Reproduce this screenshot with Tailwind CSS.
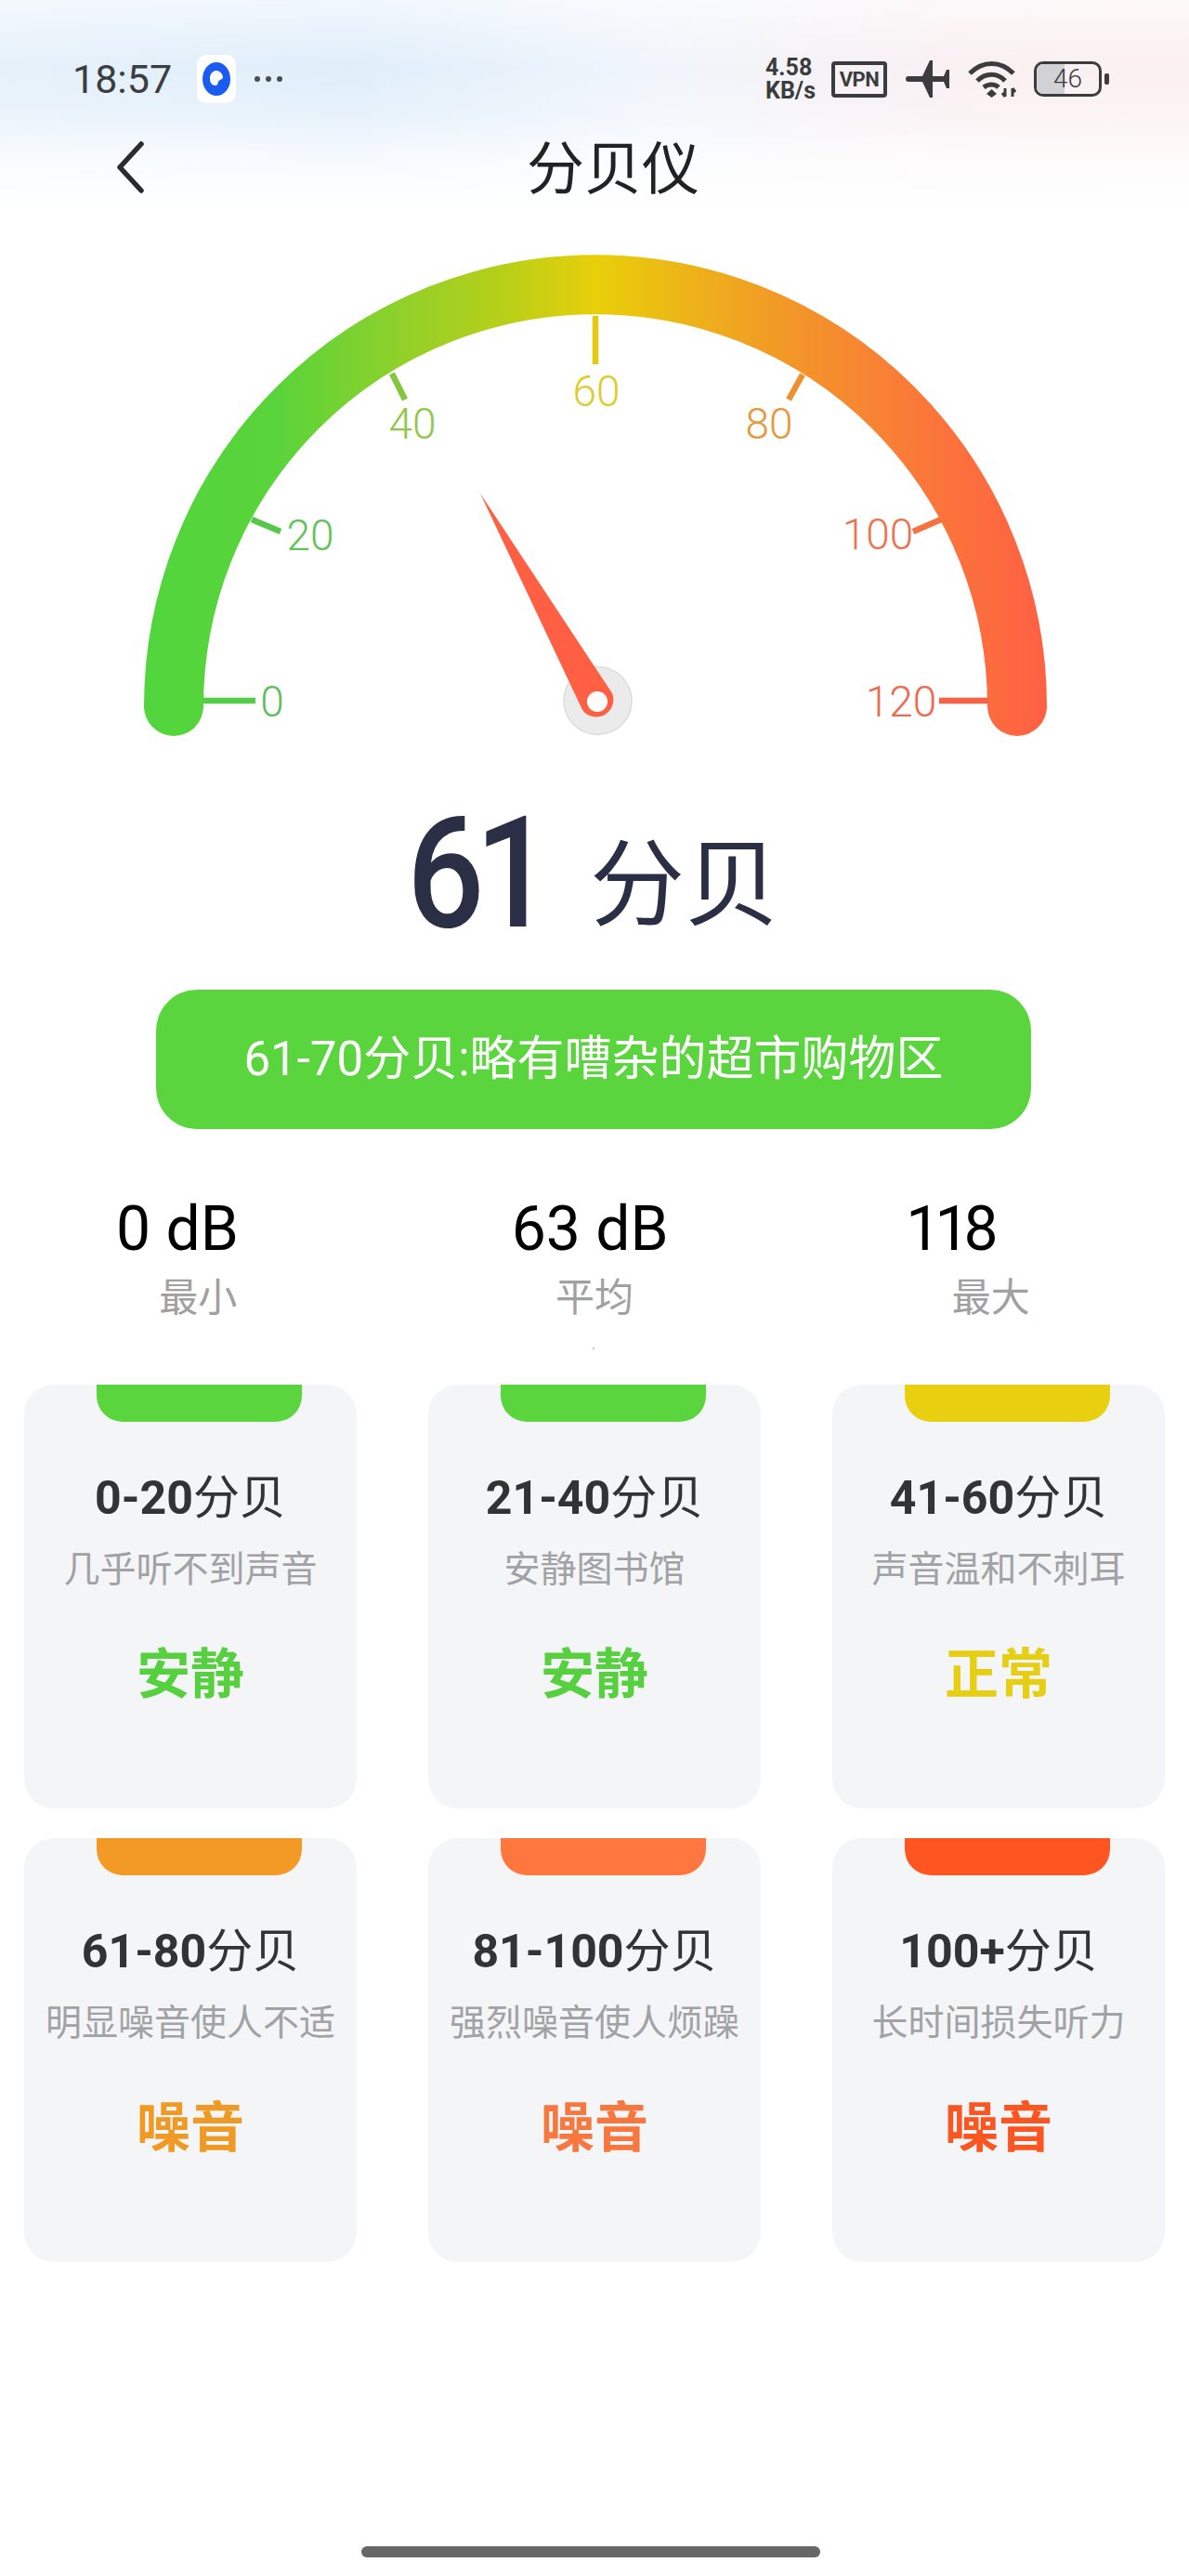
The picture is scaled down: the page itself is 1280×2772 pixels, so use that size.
<!DOCTYPE html>
<html lang="zh-CN">
<head>
    <meta charset="UTF-8">
    <meta name="viewport" content="width=device-width, initial-scale=1.0">
    <title>分贝仪</title>
    <script src="https://cdn.jsdelivr.net/npm/@tailwindcss/browser@4"></script>
</head>
<body class="bg-white">
<div class="relative w-[1280px] h-[2772px] overflow-hidden bg-white font-['Roboto','Noto_Sans_CJK_SC',sans-serif]">
    <!-- tinted backdrop behind status bar -->
    <div class="absolute top-0 left-0 w-full h-[240px] bg-[linear-gradient(to_right,#e6f1fa_0%,#e0eefa_30%,#f0f5fb_55%,#f9f0f2_80%,#fbf0f1_100%)]">
        <div class="w-full h-full bg-[linear-gradient(to_bottom,rgba(255,255,255,0.55)_0%,rgba(255,255,255,0)_30%,rgba(255,255,255,0.2)_50%,rgba(255,255,255,0.75)_72%,rgba(255,255,255,1)_95%)]"></div>
    </div>

    <div class="relative">
        <!-- status bar -->
        <div class="flex items-center h-[42px] mt-[64px]">
            <span class="ml-[78px] w-[110px] text-[43px] leading-none text-[#3a3d42]">18:57</span>
            <div class="ml-[24px] w-[42px] h-[52px] rounded-[10px] bg-white flex items-center justify-center">
                <svg width="30" height="36" viewBox="0 0 30 36"><ellipse cx="15" cy="18" rx="15" ry="18" fill="#1a5cf0"/><path d="M8 18a7 8 0 0 1 14-2c0 3-4 2-5 5s-1 4-3 4c-4 0-6-3-6-7z" fill="#fff"/></svg>
            </div>
            <div class="ml-[20px] flex gap-[6px]">
                <div class="w-[6px] h-[6px] rounded-full bg-[#4a4d52]"></div>
                <div class="w-[6px] h-[6px] rounded-full bg-[#4a4d52]"></div>
                <div class="w-[6px] h-[6px] rounded-full bg-[#4a4d52]"></div>
            </div>

            <div class="ml-[520px] w-[60px] flex flex-col text-[25px] leading-[25px] font-bold text-[#3c3c3e]">
                <span>4.58</span>
                <span>KB/s</span>
            </div>
            <div class="ml-[11px] w-[60px] h-[39px] border-[4px] border-[#3c3c3e] rounded-[4px] flex items-center justify-center text-[22px] font-bold text-[#3c3c3e] tracking-[-0.5px]">VPN</div>
            <svg class="ml-[20px]" width="48" height="40" viewBox="0 0 48 40"><path d="M3 17H18L26 0H29V17H41L44 10H47V30H44L41 23H29V40H26L18 23H3A3 3 0 0 1 3 17Z" fill="#3c3c3e"/></svg>
            <svg class="ml-[18px]" width="53" height="40" viewBox="0 0 53 40" fill="none" stroke="#3c3c3e" stroke-width="5"><path d="M3 14C17 0 36 0 50 14"/><path d="M11 22C20 13 33 13 41 22"/><path d="M18 29C23 25 30 25 34 29"/><path d="M26.5 31L32 36L26.5 40L21 36Z" fill="#3c3c3e" stroke="none"/><path d="M41 30V39M38 35L41 39M49 39V30M49 30L52 34" stroke-width="3"/></svg>
            <div class="relative ml-[19px] w-[73px] h-[38px] border-[3.5px] border-[#3c3c3e] rounded-[10px] overflow-hidden">
                <div class="w-[30px] h-full bg-[#d2d1d4]"></div>
                <span class="absolute inset-0 flex items-center justify-center text-[28px] font-light leading-none text-[#3c3c3e]">46</span>
            </div>
            <div class="ml-[3px] w-[5px] h-[12px] rounded-[2px] bg-[#3c3c3e]"></div>
        </div>

        <!-- title bar -->
        <div class="relative h-[60px] mt-[47px] pl-[40px] flex items-center justify-center">
            <svg class="absolute left-[124px] top-[-1px]" width="32" height="56" viewBox="0 0 32 56" fill="none" stroke="#2b2b2b" stroke-width="5.5" stroke-linecap="round" stroke-linejoin="round"><path d="M28 3L5 28L28 53"/></svg>
            <h1 class="text-[62px] leading-none text-[#222]">分贝仪</h1>
        </div>

        <!-- gauge -->
        <svg class="block mt-[37px]" width="1280" height="560" viewBox="0 250 1280 560">
            <defs>
                <linearGradient id="arcGrad" gradientUnits="userSpaceOnUse" x1="155" y1="0" x2="1127" y2="0">
                    <stop offset="0" stop-color="#52d53d"/>
                    <stop offset="0.15" stop-color="#5ad43a"/>
                    <stop offset="0.3" stop-color="#96d028"/>
                    <stop offset="0.4" stop-color="#b8cf18"/>
                    <stop offset="0.5" stop-color="#e8cf0a"/>
                    <stop offset="0.7" stop-color="#f29a26"/>
                    <stop offset="0.85" stop-color="#fa7a38"/>
                    <stop offset="1" stop-color="#ff6043"/>
                </linearGradient>
            </defs>
            <path d="M187 760A454 454 0 0 1 1095 760" fill="none" stroke="url(#arcGrad)" stroke-width="64" stroke-linecap="round"/>
            <g stroke-width="6.5">
                <path d="M219 754H275" stroke="#52cf47"/>
                <path d="M271 559L302 572" stroke="#55c84a"/>
                <path d="M422 402L436 430" stroke="#84c73c"/>
                <path d="M641 340V392" stroke="#e3cb14"/>
                <path d="M864 403L849 430" stroke="#ee9030"/>
                <path d="M1013 559L983 572" stroke="#f4723f"/>
                <path d="M1063 754H1011" stroke="#fb6045"/>
            </g>
            <g class="text-[46px] font-light" text-anchor="middle" dominant-baseline="central">
                <text x="293" y="755" fill="#62bd5e">0</text>
                <text x="334" y="576" fill="#62c45a">20</text>
                <text x="444" y="456" fill="#8fc84a">40</text>
                <text x="642" y="421" fill="#e0cc2b">60</text>
                <text x="828" y="456" fill="#e8973a">80</text>
                <text x="945" y="575" fill="#ee7350">100</text>
                <text x="970" y="755" fill="#ee6a50">120</text>
            </g>
            <circle cx="643.5" cy="754" r="36.5" fill="#ebebec" stroke="#dcdcdd" stroke-width="1.5"/>
            <path d="M517 531L659 746A18.5 18.5 0 0 1 627 764Z" fill="#ff6044"/>
            <circle cx="643" cy="755" r="11" fill="#fff"/>
        </svg>

        <!-- reading -->
        <div class="flex items-center h-[200px] mt-[30px] pl-[438px] text-[#2b2f45]">
            <span class="w-[197px] origin-left scale-x-[0.88] text-[167px] leading-none font-medium tracking-[-0.07em]">61</span>
            <span class="mt-[26px] text-[102px] leading-none">分贝</span>
        </div>

        <!-- current range banner -->
        <div class="ml-[168px] mt-[25px] w-[942px] h-[150px] rounded-[44px] bg-[#5ad53e] flex items-center justify-center text-[51px] text-white">61-70分贝:略有嘈杂的超市购物区</div>

        <!-- min / avg / max -->
        <div class="relative grid grid-cols-3 mt-[73px]">
            <div>
                <div class="pl-[125px] text-[66px] leading-[70px] text-black">0 dB</div>
                <div class="mt-[14px] text-center text-[42px] leading-[50px] text-[#a0a0a0]">最小</div>
            </div>
            <div>
                <div class="pl-[124px] text-[66px] leading-[70px] text-black">63 dB</div>
                <div class="mt-[14px] text-center text-[42px] leading-[50px] text-[#a0a0a0]">平均</div>
            </div>
            <div>
                <div class="pl-[122px] text-[66px] leading-[70px] tracking-[-6px] text-black">118</div>
                <div class="mt-[14px] text-center text-[42px] leading-[50px] text-[#a0a0a0]">最大</div>
            </div>
            <div class="absolute left-[638px] top-[162px] w-[2px] h-[2px] bg-[#c4c4c4]"></div>
        </div>

        <!-- level cards -->
        <div class="grid grid-cols-[358px_358px_358px] gap-x-[77px] gap-y-[32px] pl-[26px] mt-[68px]">
            <div class="h-[456px] rounded-[32px] bg-[#f4f5f7] overflow-hidden text-center">
                <div class="ml-[78px] w-[221px] h-[40px] rounded-b-[28px] bg-[#5ad53e]"></div>
                <div class="mt-[52px] text-[50px] leading-[60px] text-[#333]"><span class="font-bold">0-20</span>分贝</div>
                <div class="mt-[25px] text-[39px] leading-[44px] text-[#a0a2a5]">几乎听不到声音</div>
                <div class="mt-[59px] text-[58px] leading-[64px] font-bold text-[#56d03e]">安静</div>
            </div>
            <div class="h-[456px] rounded-[32px] bg-[#f4f5f7] overflow-hidden text-center">
                <div class="ml-[78px] w-[221px] h-[40px] rounded-b-[28px] bg-[#5ad53e]"></div>
                <div class="mt-[52px] text-[50px] leading-[60px] text-[#333]"><span class="font-bold">21-40</span>分贝</div>
                <div class="mt-[25px] text-[39px] leading-[44px] text-[#a0a2a5]">安静图书馆</div>
                <div class="mt-[59px] text-[58px] leading-[64px] font-bold text-[#56d03e]">安静</div>
            </div>
            <div class="h-[456px] rounded-[32px] bg-[#f4f5f7] overflow-hidden text-center">
                <div class="ml-[78px] w-[221px] h-[40px] rounded-b-[28px] bg-[#e8cf10]"></div>
                <div class="mt-[52px] text-[50px] leading-[60px] text-[#333]"><span class="font-bold">41-60</span>分贝</div>
                <div class="mt-[25px] text-[39px] leading-[44px] text-[#a0a2a5]">声音温和不刺耳</div>
                <div class="mt-[59px] text-[58px] leading-[64px] font-bold text-[#e6ce14]">正常</div>
            </div>
            <div class="h-[456px] rounded-[32px] bg-[#f4f5f7] overflow-hidden text-center">
                <div class="ml-[78px] w-[221px] h-[40px] rounded-b-[28px] bg-[#f29a25]"></div>
                <div class="mt-[52px] text-[50px] leading-[60px] text-[#333]"><span class="font-bold">61-80</span>分贝</div>
                <div class="mt-[25px] text-[39px] leading-[44px] text-[#a0a2a5]">明显噪音使人不适</div>
                <div class="mt-[59px] text-[58px] leading-[64px] font-bold text-[#f09a26]">噪音</div>
            </div>
            <div class="h-[456px] rounded-[32px] bg-[#f4f5f7] overflow-hidden text-center">
                <div class="ml-[78px] w-[221px] h-[40px] rounded-b-[28px] bg-[#ff773e]"></div>
                <div class="mt-[52px] text-[50px] leading-[60px] text-[#333]"><span class="font-bold">81-100</span>分贝</div>
                <div class="mt-[25px] text-[39px] leading-[44px] text-[#a0a2a5]">强烈噪音使人烦躁</div>
                <div class="mt-[59px] text-[58px] leading-[64px] font-bold text-[#f8773f]">噪音</div>
            </div>
            <div class="h-[456px] rounded-[32px] bg-[#f4f5f7] overflow-hidden text-center">
                <div class="ml-[78px] w-[221px] h-[40px] rounded-b-[28px] bg-[#ff5520]"></div>
                <div class="mt-[52px] text-[50px] leading-[60px] text-[#333]"><span class="font-bold">100+</span>分贝</div>
                <div class="mt-[25px] text-[39px] leading-[44px] text-[#a0a2a5]">长时间损失听力</div>
                <div class="mt-[59px] text-[58px] leading-[64px] font-bold text-[#fb5522]">噪音</div>
            </div>
        </div>

        <!-- home indicator -->
        <div class="ml-[389px] mt-[306px] w-[494px] h-[12px] rounded-full bg-[#676767]"></div>
    </div>
</div>
</body>
</html>
